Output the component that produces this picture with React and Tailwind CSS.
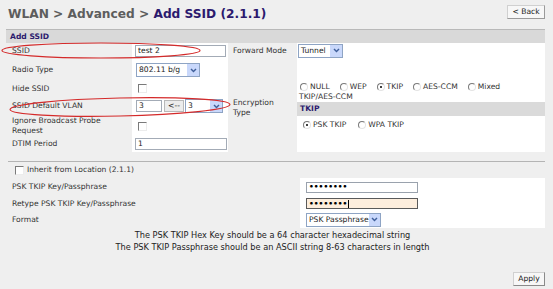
import React from "react";

function Checkbox({ className = "" }) {
  return (
    <div
      className={
        "w-[9px] h-[9px] shrink-0 bg-white border border-t-[#7a7a7a] border-l-[#7a7a7a] border-b-[#ececec] border-r-[#ececec] " +
        className
      }
    />
  );
}

function Radio({ checked = false }) {
  return (
    <span className="relative inline-block w-[8px] h-[8px] shrink-0 rounded-full bg-white border border-t-[#7a7a7a] border-l-[#7a7a7a] border-b-[#e4e4e4] border-r-[#e4e4e4]">
      {checked && (
        <span className="absolute left-[2px] top-[2px] w-[2px] h-[2px] rounded-full bg-black" />
      )}
    </span>
  );
}

function Chevron() {
  return (
    <svg width="7" height="5" viewBox="0 0 7 5">
      <path d="M1 1 L3.5 3.6 L6 1" fill="none" stroke="#3f5f9a" strokeWidth="1.4" />
    </svg>
  );
}

function Select({ className = "", text }) {
  return (
    <div className={"flex items-stretch h-[14px] border border-[#8ea4c4] bg-white " + className}>
      <span className="flex-1 pl-[2px] flex items-center whitespace-nowrap text-[#222]">{text}</span>
      <span className="w-[12px] bg-[#c9d8fb] flex items-center justify-center">
        <Chevron />
      </span>
    </div>
  );
}

function Input({ className = "", children }) {
  return (
    <div className={"h-[12px] border border-[#a3abb6] bg-white flex items-center pl-[2px] text-[#222] " + className}>
      {children}
    </div>
  );
}

function LRow({ h, label, children }) {
  return (
    <div className={"flex " + h}>
      <div className="w-[126px] pl-[6px] flex items-center">{label}</div>
      <div className="w-[96px] bg-white flex items-center pl-[3px]">{children}</div>
    </div>
  );
}

function RadioItem({ checked, label, className = "" }) {
  return (
    <span className={"flex items-center " + className}>
      <Radio checked={checked} />
      <span className="ml-[2px]">{label}</span>
    </span>
  );
}

export default function App() {
  return (
    <div className="relative w-[553px] h-[289px] overflow-hidden bg-[#efefef] text-[#333] text-[7.6px] leading-[10px] font-['DejaVu_Sans',Verdana,sans-serif]">
      {/* header */}
      <div className="flex justify-between items-start h-[29px] px-[8px]">
        <div className="pt-[8px] text-[12.2px] leading-none font-bold text-[#5d5d5d] whitespace-nowrap">
          WLAN &gt; Advanced &gt; <span className="text-[#2c1a6e]">Add SSID (2.1.1)</span>
        </div>
        <div className="mt-[5px] h-[14px] w-[38px] flex items-center justify-center bg-[#f7f7f7] border border-[#d0d0d0] border-r-[#9a9a9a] border-b-[#9a9a9a] text-[#222]">
          &lt; Back
        </div>
      </div>

      {/* Add SSID section */}
      <div className="ml-[6px] mr-[8px]">
        <div className="h-[14px] border-t border-[#b9b9b9] bg-[#d9d9d9] pl-[4px] flex items-center font-bold text-[#2c1a6e]">
          Add SSID
        </div>
        <div className="flex h-[109px]">
          {/* left column */}
          <div className="w-[222px] flex flex-col">
            <LRow h="h-[15px]" label="SSID">
              <Input className="w-[91px]">test 2</Input>
            </LRow>
            <LRow h="h-[24px]" label="Radio Type">
              <Select className="w-[64px] ml-[1px]" text="802.11 b/g" />
            </LRow>
            <LRow h="h-[13px]" label="Hide SSID">
              <Checkbox className="ml-[3px]" />
            </LRow>
            <LRow h="h-[22px]" label="SSID Default VLAN">
              <div className="flex items-center">
                <Input className="w-[26px] ml-[1px]">3</Input>
                <div className="ml-[2px] h-[12px] w-[20px] flex items-center justify-center bg-[#ececec] border border-[#b8b8b8] text-[#222]">
                  &lt;--
                </div>
                <Select className="w-[38px] ml-[1px]" text="3" />
              </div>
            </LRow>
            <LRow
              h="h-[18px]"
              label={
                <span>
                  Ignore Broadcast Probe
                  <br />
                  Request
                </span>
              }
            >
              <Checkbox className="ml-[3px]" />
            </LRow>
            <LRow h="h-[17px]" label="DTIM Period">
              <Input className="w-[92px]">1</Input>
            </LRow>
          </div>

          {/* right column */}
          <div className="flex-1 flex flex-col">
            <div className="flex h-[15px]">
              <div className="w-[69px] pl-[5px] flex items-center">Forward Mode</div>
              <div className="flex-1 bg-white flex items-center pl-[1px]">
                <Select className="w-[45px]" text="Tunnel" />
              </div>
            </div>
            <div className="flex h-[94px]">
              <div className="w-[69px] pl-[5px] pt-[6px] flex items-center">
                <span>
                  Encryption
                  <br />
                  Type
                </span>
              </div>
              <div className="flex-1 bg-white pt-[24px]">
                <div className="h-[10px] flex items-center pl-[3px]">
                  <RadioItem label="NULL" />
                  <RadioItem label="WEP" className="ml-[10px]" />
                  <RadioItem checked label="TKIP" className="ml-[10px]" />
                  <RadioItem label="AES-CCM" className="ml-[10px]" />
                  <RadioItem label="Mixed" className="ml-[10px]" />
                </div>
                <div className="h-[10px] flex items-center pl-[2px]">TKIP/AES-CCM</div>
                <div className="h-[14px] bg-[#dadada] pl-[3px] flex items-center font-bold text-[#2c1a6e]">
                  TKIP
                </div>
                <div className="h-[14px] mt-[2px] flex items-center pl-[6px]">
                  <RadioItem checked label="PSK TKIP" />
                  <RadioItem label="WPA TKIP" className="ml-[12px]" />
                </div>
              </div>
            </div>
          </div>
        </div>
      </div>

      {/* separator */}
      <div className="mx-[8px] mt-[9px] border-t border-[#b4b4b4]" />

      {/* inherit */}
      <div className="h-[16px] flex items-center pl-[15px]">
        <Checkbox />
        <span className="ml-[3px]">Inherit from Location (2.1.1)</span>
      </div>

      {/* key rows */}
      <div className="ml-[6px] mr-[8px] flex flex-col">
        <div className="flex h-[18px]">
          <div className="w-[294px] pl-[6px] flex items-center">PSK TKIP Key/Passphrase</div>
          <div className="flex-1 bg-white flex items-center pl-[6px]">
            <div className="h-[11px] w-[112px] border border-[#9aa2ad] bg-white flex items-center pl-[2px] text-[7.5px] font-bold text-black">
              ••••••••
            </div>
          </div>
        </div>
        <div className="flex h-[15px]">
          <div className="w-[294px] pl-[6px] flex items-center">Retype PSK TKIP Key/Passphrase</div>
          <div className="flex-1 bg-white flex items-center pl-[6px]">
            <div className="h-[11px] w-[112px] border border-[#5a5a5a] bg-[#fdeedd] flex items-center pl-[2px] text-[7.5px] font-bold text-black">
              ••••••••
              <span className="ml-[1px] w-[1px] h-[8px] bg-black" />
            </div>
          </div>
        </div>
        <div className="flex h-[17px]">
          <div className="w-[294px] pl-[6px] flex items-center">Format</div>
          <div className="flex-1 bg-white flex items-center pl-[6px]">
            <Select className="w-[75px]" text="PSK Passphrase" />
          </div>
        </div>
      </div>

      {/* notes */}
      <div className="mr-[8px] mt-[1px] text-center text-[8.2px] leading-[12px] text-[#222]">
        <div>The PSK TKIP Hex Key should be a 64 character hexadecimal string</div>
        <div>The PSK TKIP Passphrase should be an ASCII string 8-63 characters in length</div>
      </div>

      {/* apply */}
      <div className="flex justify-end mr-[8px] mt-[19px]">
        <div className="h-[14px] w-[32px] flex items-center justify-center bg-[#f7f7f7] border border-[#d0d0d0] border-r-[#8a8a8a] border-b-[#8a8a8a] text-[#222]">
          Apply
        </div>
      </div>

      {/* red annotation ellipses */}
      <svg className="absolute left-0 top-0 pointer-events-none" width="553" height="289">
        <ellipse cx="101" cy="50.5" rx="99" ry="7.5" fill="none" stroke="#d42a2a" strokeWidth="1.2" />
        <ellipse
          cx="120"
          cy="107"
          rx="110"
          ry="9"
          transform="rotate(-1.3 120 107)"
          fill="none"
          stroke="#d42a2a"
          strokeWidth="1.2"
        />
      </svg>
    </div>
  );
}
